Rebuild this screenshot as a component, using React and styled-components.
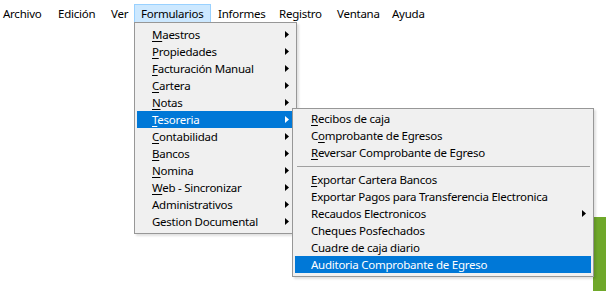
import React from "react";
import styled, { createGlobalStyle, css } from "styled-components";

const Global = createGlobalStyle`
  html, body { margin: 0; padding: 0; background: #ffffff; }
  body {
    font-family: "Segoe UI", "Noto Sans", "DejaVu Sans", sans-serif;
    font-size: 11.5px;
    letter-spacing: -0.25px;
    color: #000;
    overflow: hidden;
  }
`;

const Page = styled.div`
  position: relative;
  width: 606px;
  height: 291px;
  overflow: hidden;
  background: #fff;
`;

const MenuBar = styled.div`
  display: flex;
  align-items: flex-start;
  height: 22px;
  margin-left: -4px;
`;

const BarItem = styled.div`
  box-sizing: border-box;
  width: ${(p) => p.$w}px;
  flex: none;
  height: 19px;
  margin-top: 4px;
  padding: 0 0 0 6px;
  line-height: 18px;
  border: 1px solid transparent;
  white-space: nowrap;
  ${(p) =>
    p.$open &&
    css`
      background: #cce8ff;
      border-color: #99d1ff;
    `}
`;

const Content = styled.div`
  display: flex;
  justify-content: flex-end;
`;

const GreenBlock = styled.div`
  width: 13px;
  height: 80px;
  margin-top: 195px;
  background: #6fa82a;
`;

const Popup = styled.div`
  position: absolute;
  left: ${(p) => p.$left}px;
  top: ${(p) => p.$top}px;
  width: ${(p) => p.$width}px;
  box-sizing: border-box;
  background: #f0f0f0;
  border: 1px solid #979797;
  padding: ${(p) => p.$pad || "3px 2px"};
  box-shadow: 2px 2px 2px rgba(0, 0, 0, 0.12);
`;

const Item = styled.div`
  display: flex;
  align-items: center;
  height: 17px;
  line-height: 17px;
  padding-left: ${(p) => p.$indent}px;
  padding-right: 4px;
  white-space: nowrap;
  ${(p) =>
    p.$active &&
    css`
      background: #0078d7;
      color: #fff;
    `}
`;

const Label = styled.span`
  flex: 1;
`;

const Key = styled.span`
  text-decoration: underline;
  text-underline-offset: 2px;
  text-decoration-thickness: 1px;
`;

const Arrow = styled.svg`
  width: 4px;
  height: 7px;
  margin-right: 1px;
  fill: currentColor;
`;

const Separator = styled.div`
  height: 10px;
  display: flex;
  align-items: center;
  padding: 0 1px 0 2px;
  &::after {
    content: "";
    flex: 1;
    height: 1px;
    background: #a0a0a0;
  }
`;

const barItems = [
  { t: "Archivo", w: 55 },
  { t: "Edición", w: 53 },
  { t: "Ver", w: 30 },
  { t: "Formularios", w: 77, open: true },
  { t: "Informes", w: 61 },
  { t: "Registro", w: 58 },
  { t: "Ventana", w: 55 },
  { t: "Ayuda", w: 48 },
];

const mainItems = [
  { k: "M", r: "aestros" },
  { k: "P", r: "ropiedades" },
  { k: "F", r: "acturación Manual" },
  { k: "C", r: "artera" },
  { k: "N", r: "otas" },
  { k: "T", r: "esoreria", active: true },
  { k: "C", r: "ontabilidad" },
  { k: "B", r: "ancos" },
  { k: "N", r: "omina" },
  { k: "W", r: "eb - Sincronizar" },
  { r: "Administrativos" },
  { r: "Gestion Documental" },
];

const subItems = [
  { k: "R", r: "ecibos de caja" },
  { pre: "C", k: "o", r: "mprobante de Egresos" },
  { k: "R", r: "eversar Comprobante de Egreso" },
  { sep: true },
  { k: "E", r: "xportar Cartera Bancos" },
  { r: "Exportar Pagos para Transferencia Electronica" },
  { r: "Recaudos Electronicos", sub: true },
  { r: "Cheques Posfechados" },
  { r: "Cuadre de caja diario" },
  { r: "Auditoria Comprobante de Egreso", active: true },
];

const ArrowIcon = () => (
  <Arrow viewBox="0 0 4 7">
    <path d="M0 0 L4 3.5 L0 7 Z" />
  </Arrow>
);

const Text = ({ it }) => (
  <Label>
    {it.pre}
    {it.k && <Key>{it.k}</Key>}
    {it.r}
  </Label>
);

export default function App() {
  return (
    <Page>
      <Global />
      <MenuBar>
        {barItems.map((b) => (
          <BarItem key={b.t} $w={b.w} $open={b.open}>
            {b.t}
          </BarItem>
        ))}
      </MenuBar>
      <Content>
        <GreenBlock />
      </Content>

      <Popup $left={134} $top={22} $width={163} $pad="3px 2px 3px 2px">
        {mainItems.map((it, i) => (
          <Item key={i} $indent={15} $active={it.active}>
            <Text it={it} />
            <ArrowIcon />
          </Item>
        ))}
      </Popup>

      <Popup $left={292} $top={108} $width={302} $pad="1px 2px 3px 2px">
        {subItems.map((it, i) =>
          it.sep ? (
            <Separator key={i} />
          ) : (
            <Item key={i} $indent={16} $active={it.active}>
              <Text it={it} />
              {it.sub && <ArrowIcon />}
            </Item>
          )
        )}
      </Popup>
    </Page>
  );
}
